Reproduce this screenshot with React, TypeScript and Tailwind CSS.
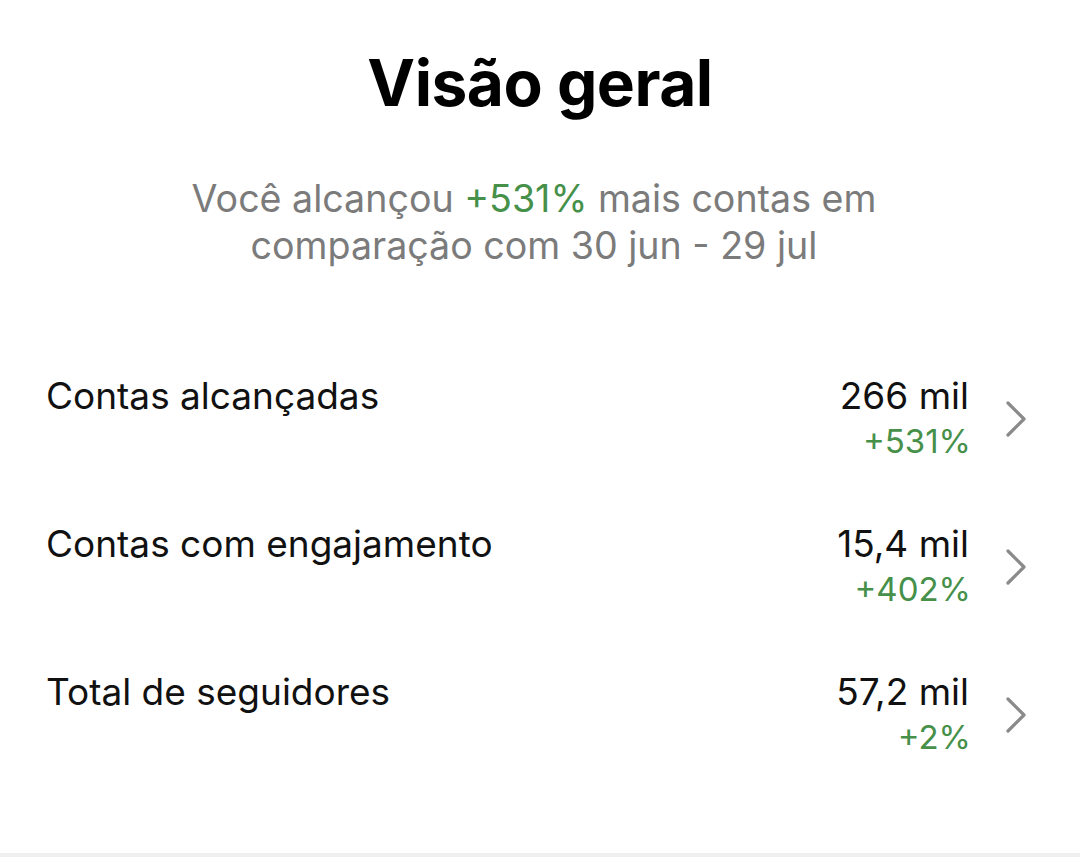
import React from "react";

const rows = [
  { label: "Contas alcançadas", value: "266 mil", delta: "+531%" },
  { label: "Contas com engajamento", value: "15,4 mil", delta: "+402%" },
  { label: "Total de seguidores", value: "57,2 mil", delta: "+2%" },
];

function Chevron() {
  return (
    <svg width="24" height="40" viewBox="0 0 24 40" fill="none" className="shrink-0">
      <path d="M4 4 L20 20 L4 36" stroke="#8a8a8a" strokeWidth="3.2" strokeLinecap="round" strokeLinejoin="round" />
    </svg>
  );
}

export default function App() {
  return (
    <div
      className="w-[1080px] h-[857px] bg-white flex flex-col overflow-hidden"
      style={{ fontFamily: "Inter, 'Noto Sans', sans-serif" }}
    >
      <div className="flex-1 flex flex-col">
        <h1 className="pt-[43px] text-center text-[64px] leading-[80px] font-bold text-black tracking-[-0.5px]">
          Visão geral
        </h1>
        <p className="mt-[52px] pr-[12px] text-center text-[37.6px] leading-[47px] text-[#7b7b7b]">
          Você alcançou <span className="text-[#46904a]">+531%</span> mais contas em
          <br />
          comparação com 30 jun - 29 jul
        </p>
        <div className="mt-[105px] flex flex-col gap-[58px] pl-[46px] pr-[52px]">
          {rows.map((r) => (
            <div key={r.label} className="flex items-start justify-between">
              <span className="text-[37px] leading-[44px] text-[#111]">{r.label}</span>
              <div className="flex items-center gap-[35px]">
                <div className="flex flex-col items-end">
                  <span className="text-[37px] leading-[44px] text-[#111]">{r.value}</span>
                  <span className="text-[33px] leading-[46px] text-[#46904a] -mr-[2px]">{r.delta}</span>
                </div>
                <Chevron />
              </div>
            </div>
          ))}
        </div>
      </div>
      <div className="h-[4px] bg-[#efefef]" />
    </div>
  );
}
